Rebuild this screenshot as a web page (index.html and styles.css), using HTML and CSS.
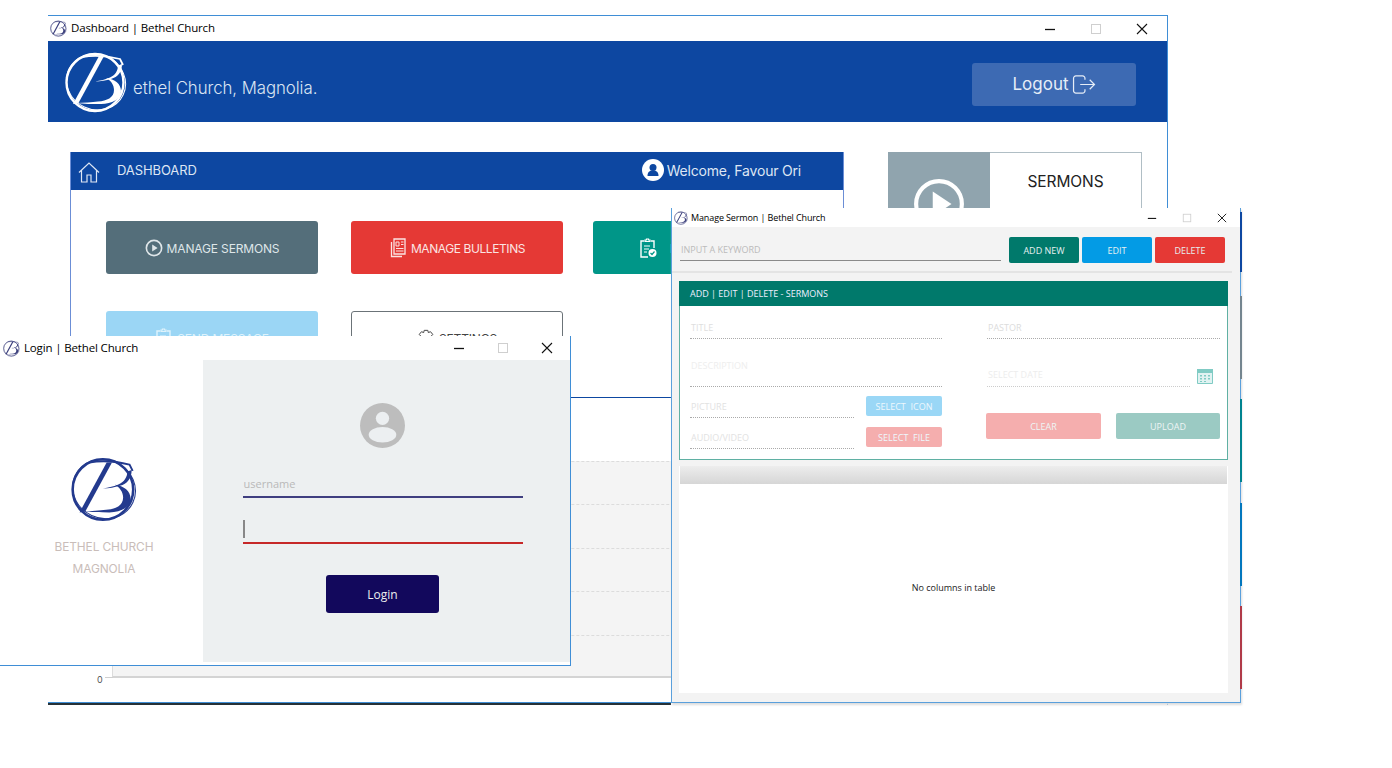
FILE: index.html
```html
<!DOCTYPE html>
<html lang="en">
<head>
<meta charset="utf-8">
<title>Bethel Church</title>
<link rel="stylesheet" href="styles.css">
</head>
<body>
<svg class="sprite" aria-hidden="true">
  <symbol id="logo" viewBox="0 0 64 64">
    <circle cx="31" cy="32.500" r="28.500" fill="none" stroke="currentColor" stroke-width="2.400"/>
    <ellipse cx="32" cy="32" rx="30" ry="27.500" transform="rotate(25 32 32)" fill="none" stroke="currentColor" stroke-width="1"/>
    <path d="M34.500 7h5L14.500 53l-5.500 1z" fill="currentColor"/>
    <path d="M18 7c12-2 26-1 38 2l3 6" fill="none" stroke="currentColor" stroke-width="1.800"/>
    <path d="M58 14c0 8-4 13-11 15-5 1.500-10 2.500-16 2.500 5-1 11-2 15-4 5-2 8-7 8-12z" fill="currentColor"/>
    <path d="M42 28c9 1 15 6 15 13 0 8-9 13-20 13-9 0-17 0-25-1 8 0 16-1 22-1.500 9-.5 16-4 16-11.500 0-5-3-9.500-8-12z" fill="currentColor"/>
  </symbol>
  <symbol id="min" viewBox="0 0 12 12"><path d="M1 6.500h10" stroke="currentColor" stroke-width="1.300"/></symbol>
  <symbol id="max" viewBox="0 0 12 12"><rect x="1.500" y="1.500" width="9" height="9" fill="none" stroke="#cfcfcf" stroke-width="1"/></symbol>
  <symbol id="close" viewBox="0 0 12 12"><path d="M1 1l10 10M11 1L1 11" stroke="currentColor" stroke-width="1.100"/></symbol>
  <symbol id="play" viewBox="0 0 20 20"><circle cx="10" cy="10" r="8.500" fill="none" stroke="currentColor" stroke-width="1.800"/><path d="M8 6l6 4-6 4z" fill="currentColor"/></symbol>
  <symbol id="clip" viewBox="0 0 18 20">
    <path d="M5 3H2v16h7M12 3h3v7" fill="none" stroke="currentColor" stroke-width="1.400"/>
    <path d="M6 3.500V2h1.500V1h2v1H11v1.500z" fill="none" stroke="currentColor" stroke-width="1.200"/>
    <path d="M5 8h6M5 11h5M5 14h3" stroke="currentColor" stroke-width="1"/>
    <circle cx="13.500" cy="15" r="4" fill="currentColor"/>
    <path d="M11.500 15l1.500 1.500 2.500-3" fill="none" stroke="#009688" stroke-width="1.200"/>
  </symbol>
</svg>

<main class="desktop">

  <section class="win win-main">
    <header class="titlebar titlebar-main">
      <svg class="fav"><use href="#logo"/></svg>
      <span class="title">Dashboard | Bethel Church</span>
      <div class="controls controls-main">
        <svg class="ctl"><use href="#min"/></svg>
        <svg class="ctl"><use href="#max"/></svg>
        <svg class="ctl"><use href="#close"/></svg>
      </div>
    </header>
    <div class="brandbar">
      <svg class="brand-logo"><use href="#logo"/></svg>
      <span class="brand-name">ethel Church, Magnolia.</span>
      <button class="logout">Logout
        <svg class="logout-icon" viewBox="0 0 24 20"><path d="M13 5V3.500A2.500 2.500 0 0 0 10.500 1H3.500A2.500 2.500 0 0 0 1 3.500v13A2.500 2.500 0 0 0 3.500 19h7a2.500 2.500 0 0 0 2.500-2.500V15M8 10h15M18 5l5 5-5 5" fill="none" stroke="currentColor" stroke-width="1.300"/></svg>
      </button>
    </div>
    <div class="dash">
      <div class="dash-left">
        <div class="panel">
          <div class="panel-head">
            <svg class="home" viewBox="0 0 22 21"><path d="M1 10.500L11 1l10 9.500M3.500 8.500V20H9v-7h4v7h5.500V8.500" fill="none" stroke="currentColor" stroke-width="1.200"/></svg>
            <span class="panel-title">DASHBOARD</span>
            <svg class="user" viewBox="0 0 22 22"><circle cx="11" cy="11" r="11" fill="#fff"/><circle cx="11" cy="8.500" r="3.500" fill="#0d47a1"/><path d="M5.500 17c0-4 2-5.500 5.500-5.500s5.500 1.500 5.500 5.500z" fill="#0d47a1"/></svg>
            <span class="welcome">Welcome, Favour Ori</span>
          </div>
          <div class="menu">
            <a class="tile tile-slate"><svg class="tile-icon"><use href="#play"/></svg>MANAGE SERMONS</a>
            <a class="tile tile-red">
              <svg class="tile-icon" viewBox="0 0 18 20"><path d="M5 1h11v15H5zM2.500 4v14.500H13" fill="none" stroke="currentColor" stroke-width="1.300"/><path d="M7 4h3v4H7zM12 4h2.500M12 6.500h2.500M7 10.500h7.500M7 13h7.500" fill="none" stroke="currentColor" stroke-width="1"/></svg>
              MANAGE BULLETINS</a>
            <a class="tile tile-teal"><svg class="tile-icon"><use href="#clip"/></svg>M</a>
            <a class="tile tile-sky"><svg class="tile-icon"><use href="#clip"/></svg>SEND MESSAGE</a>
            <a class="tile tile-outline">
              <svg class="tile-icon" viewBox="0 0 20 20"><path d="M8 1.500h4l.6 2.500 2.400-1 2.500 3-1.800 2 1.800 2.500-2.500 3-2.400-1-.6 2.500H8l-.6-2.500-2.400 1-2.500-3L4.300 8 2.500 6l2.500-3 2.400 1z" fill="none" stroke="currentColor" stroke-width="1.100"/></svg>
              SETTINGS</a>
          </div>
        </div>
        <div class="chart">
          <div class="grid-row"></div>
          <div class="grid-row"></div>
          <div class="grid-row"></div>
          <div class="grid-row"></div>
          <div class="grid-row grid-row-last"></div>
          <span class="zero">0</span>
        </div>
      </div>
      <div class="side-tile">
        <div class="side-pic">
          <svg class="side-play" viewBox="0 0 50 50"><circle cx="25" cy="25" r="22" fill="none" stroke="#fff" stroke-width="4"/><path d="M19 13l18 12-18 12z" fill="#fff"/></svg>
        </div>
        <div class="side-label">SERMONS</div>
      </div>
    </div>
    <div class="main-foot"></div>
  </section>

  <section class="win win-login">
    <header class="titlebar titlebar-login">
      <svg class="fav"><use href="#logo"/></svg>
      <span class="title">Login | Bethel Church</span>
      <div class="controls controls-login">
        <svg class="ctl"><use href="#min"/></svg>
        <svg class="ctl"><use href="#max"/></svg>
        <svg class="ctl"><use href="#close"/></svg>
      </div>
    </header>
    <div class="login-body">
      <div class="login-brand">
        <svg class="login-logo"><use href="#logo"/></svg>
        <p class="login-name">BETHEL CHURCH<br>MAGNOLIA</p>
      </div>
      <form class="login-form">
        <svg class="avatar" viewBox="0 0 44 44"><circle cx="22" cy="22" r="22" fill="#bdbdbd"/><circle cx="22" cy="15" r="6.500" fill="#eceff1"/><ellipse cx="22" cy="31" rx="13.500" ry="7.500" fill="#eceff1"/></svg>
        <div class="login-field field-user">username</div>
        <div class="login-field field-pass"><span class="caret"></span></div>
        <button class="login-btn" type="button">Login</button>
      </form>
    </div>
  </section>

  <section class="win win-sermon">
    <header class="titlebar titlebar-sermon">
      <svg class="fav fav-small"><use href="#logo"/></svg>
      <span class="title title-small">Manage Sermon | Bethel Church</span>
      <div class="controls controls-sermon">
        <svg class="ctl ctl-small"><use href="#min"/></svg>
        <svg class="ctl ctl-small"><use href="#max"/></svg>
        <svg class="ctl ctl-small"><use href="#close"/></svg>
      </div>
    </header>
    <div class="sermon-body">
      <div class="toolbar">
        <div class="search">INPUT A KEYWORD</div>
        <button class="tbtn tbtn-green">ADD NEW</button>
        <button class="tbtn tbtn-blue">EDIT</button>
        <button class="tbtn tbtn-red">DELETE</button>
      </div>
      <div class="card">
        <div class="card-head">ADD | EDIT | DELETE - SERMONS</div>
        <div class="card-body">
          <div class="col col-left">
            <div class="field f-title">TITLE</div>
            <div class="field f-desc">DESCRIPTION</div>
            <div class="file-row">
              <div class="field f-file">PICTURE</div>
              <button class="sbtn sbtn-sky">SELECT&nbsp; ICON</button>
            </div>
            <div class="file-row">
              <div class="field f-file">AUDIO/VIDEO</div>
              <button class="sbtn sbtn-pink">SELECT&nbsp; FILE</button>
            </div>
          </div>
          <div class="col col-right">
            <div class="field f-title f-pastor">PASTOR</div>
            <div class="date-row">
              <div class="field f-date">SELECT DATE</div>
              <svg class="cal" viewBox="0 0 16 17"><path d="M.5 2.500h15v14H.5z" fill="#e0f2f1" stroke="#80cbc4"/><path d="M0 2h16v4H0z" fill="#80cbc4"/><path d="M3 8h2v1.500H3zM7 8h2v1.500H7zM11 8h2v1.500h-2zM3 11h2v1.500H3zM7 11h2v1.500H7zM11 11h2v1.500h-2zM3 14h2v1H3zM7 14h2v1H7z" fill="#80cbc4"/></svg>
            </div>
            <div class="form-actions">
              <button class="abtn abtn-clear">CLEAR</button>
              <button class="abtn abtn-upload">UPLOAD</button>
            </div>
          </div>
        </div>
      </div>
      <div class="table">
        <div class="table-head"></div>
        <div class="table-empty">No columns in table</div>
      </div>
    </div>
  </section>

  <div class="edge-tiles">
    <span class="edge edge-blue"></span>
    <span class="edge edge-grey"></span>
    <span class="edge edge-teal"></span>
    <span class="edge edge-sky"></span>
    <span class="edge edge-red"></span>
  </div>
</main>
</body>
</html>
```
FILE: styles.css
```css
* { box-sizing: border-box; }
html, body { margin: 0; padding: 0; background: #fff; }
body { width: 1392px; height: 768px; overflow: hidden; font-family: "Inter", "Liberation Sans", sans-serif; }
.sprite { width: 0; height: 0; position: absolute; }
.desktop { position: relative; width: 1392px; height: 768px; }
button { font-family: inherit; border: 0; padding: 0; }

.win { position: absolute; background: #fff; display: flex; flex-direction: column; overflow: hidden; }
.win-main { left: 48px; top: 15px; width: 1120px; height: 690px; border-top: 1px solid #3f8ed6; border-right: 1px solid #3f8ed6; }
.win-login { left: 0; top: 336px; width: 571px; height: 330px; border-right: 1px solid #3f8ed6; border-bottom: 1px solid #3f8ed6; }
.win-sermon { left: 671px; top: 208px; width: 570px; height: 495px; border-left: 1px solid #5aa0dc; border-right: 1px solid #5aa0dc; border-bottom: 1px solid #5aa0dc; box-shadow: 1px 2px 2px #ddd; overflow: visible; }

.titlebar { display: flex; align-items: center; flex: none; color: #111; font-family: "Open Sans", sans-serif; }
.titlebar-main { height: 25px; padding: 0 0 0 2px; }
.titlebar-login { height: 24px; padding: 0 0 0 3px; }
.titlebar-sermon { height: 19px; padding: 0 0 0 2px; }
.fav { width: 17px; height: 17px; color: #3b3f7c; flex: none; }
.fav-small { width: 14px; height: 14px; }
.title { font-size: 11.500px; margin: -2px 0 0 4px; letter-spacing: -.15px; color: #000; }
.title-small { font-size: 9px; margin: -1px 0 0 3px; letter-spacing: -.12px; }
.controls { margin-left: auto; display: flex; align-items: center; color: #111; }
.ctl { width: 12px; height: 12px; flex: none; }
.ctl-small { width: 10px; height: 10px; }
.controls-main { gap: 34px; padding-right: 19px; }
.controls-login { gap: 32px; padding-right: 17px; }
.controls-sermon { gap: 25px; padding-right: 13px; }

.brandbar { height: 81px; flex: none; background: #0d47a1; display: flex; align-items: center; padding: 0 31px 0 16px; color: #fff; }
.brand-logo { width: 64px; height: 64px; flex: none; color: #fff; }
.brand-name { font-size: 16.800px; color: #dbe5f3; margin: 13px 0 0 5px; letter-spacing: -.05px; font-weight: 300; }
.logout { margin: 5px 0 0 auto; width: 164px; height: 43px; background: #3d6ab3; color: #e6edf7; border-radius: 3px; display: flex; align-items: center; justify-content: center; gap: 3px; font-size: 17px; }
.logout-icon { width: 24px; height: 19px; flex: none; }

.dash { display: flex; padding: 30px 0 0 22px; gap: 44px; align-items: flex-start; flex: 1; }
.dash-left { width: 774px; flex: none; }
.panel { height: 246px; border-left: 1px solid #6b8ed6; border-right: 1px solid #6b8ed6; border-bottom: 1px solid #0d47a1; overflow: hidden; }
.panel-head { height: 38px; margin: 0 -1px; background: #0d47a1; color: #dde6f4; display: flex; align-items: center; padding: 0 43px 2px 8px; }
.home { width: 22px; height: 21px; flex: none; margin-top: 4px; }
.panel-title { font-size: 13px; margin-left: 17px; letter-spacing: -.1px; }
.user { width: 22px; height: 22px; margin-left: auto; flex: none; }
.welcome { font-size: 14px; margin-left: 3px; letter-spacing: -.2px; }

.menu { display: grid; grid-template-columns: 245px 242px 212px; grid-auto-rows: 53px; row-gap: 37px; padding: 31px 0 0 35px; }
.tile { width: 212px; display: flex; align-items: center; justify-content: center; gap: 4px; padding-top: 1px; font-size: 12px; letter-spacing: -.15px; border-radius: 3px; color: #e8eef0; }
.tile-icon { width: 18px; height: 20px; flex: none; }
.tile-slate { background: #546e7a; color: #dfe6e9; }
.tile-red { background: #e53935; color: #fbe4e3; letter-spacing: -.42px; }
.tile-teal { background: #009688; color: #fff; justify-content: flex-start; padding-left: 46px; gap: 13px; }
.tile-sky { background: #9bd6f5; color: #dff3fc; }
.tile-outline { background: #fff; border: 1px solid #6b7378; color: #444; }

.chart { position: relative; margin-top: 63px; margin-left: -22px; padding-left: 64px; }
.grid-row { height: 43.400px; background: #f4f4f4; border-top: 1px dashed #dcdcdc; border-left: 1px solid #dcdcdc; position: relative; }
.grid-row-last { border-bottom: 2px solid #d4d4d4; }
.grid-row-last::before { content: ""; position: absolute; left: -8px; bottom: -2px; width: 8px; height: 1px; background: #cfcfcf; }
.chart .zero { position: absolute; left: 49px; bottom: -8px; font-size: 9px; line-height: 12px; color: #555; }

.main-foot { height: 3px; width: 623px; flex: none; background: #263238; border-top: 1px solid #3f8ed6; position: absolute; left: 0; bottom: 0; }

.side-tile { width: 254px; height: 110px; flex: none; border: 1px solid #b0bec5; display: flex; }
.side-pic { width: 102px; background: #90a4ae; margin: -1px 0 -1px -1px; display: flex; justify-content: center; align-items: flex-start; padding-top: 26px; }
.side-play { width: 52px; height: 52px; }
.side-label { flex: 1; text-align: center; padding-top: 19px; font-size: 15.500px; color: #222; letter-spacing: -.1px; }

.login-body { flex: 1; display: flex; padding-bottom: 3px; }
.login-brand { width: 203px; flex: none; display: flex; flex-direction: column; align-items: center; padding: 95px 0 0 5px; }
.login-logo { width: 70px; height: 68px; color: #233a8e; }
.login-name { margin: 13px 0 0; text-align: center; font-size: 11.900px; line-height: 22px; color: #c9bdb9; letter-spacing: -.1px; }
.login-form { flex: 1; background: #edf0f1; display: flex; flex-direction: column; align-items: center; padding: 43px 8px 0 0; }
.avatar { width: 45px; height: 45px; flex: none; }
.login-field { width: 280px; height: 30px; font-family: "Open Sans", sans-serif; font-size: 11px; line-height: 16px; padding-left: 1px; color: #b9b9b9; display: flex; align-items: flex-end; padding-bottom: 4px; }
.field-user { margin-top: 20px; border-bottom: 2px solid #3f3f80; }
.field-pass { margin-top: 17px; height: 29px; border-bottom: 2px solid #c62828; padding: 0 0 4px 0; }
.caret { width: 2px; height: 18px; background: #888; }
.login-btn { width: 113px; height: 38px; margin-top: 31px; background: #12085c; color: #eee; border-radius: 3px; font-size: 12px; font-family: "Open Sans", sans-serif; }

.sermon-body { flex: 1; background: #f3f3f3; display: flex; flex-direction: column; padding: 0 0 9px 7px; }
.toolbar { display: flex; align-items: flex-start; height: 46px; margin: 0 8px 0 -7px; padding: 10px 7px 0 8px; border-bottom: 2px solid #e4e4e4; gap: 3px; flex: none; }
.search { width: 321px; height: 24px; margin-right: 5px; border-bottom: 1px solid #8a8a8a; font-family: "Open Sans", sans-serif; font-size: 9px; line-height: 26px; padding-left: 1px; color: #bbb; }
.tbtn { width: 70px; height: 26px; color: #e6f0f0; border-radius: 2px; font-size: 9px; font-family: "Open Sans", sans-serif; }
.tbtn-green { background: #00796b; }
.tbtn-blue { background: #039be5; }
.tbtn-red { background: #e53935; }

.card { width: 549px; height: 179px; margin-top: 8px; border: 1px solid #5fb0a3; background: #fff; flex: none; display: flex; flex-direction: column; }
.card-head { height: 25px; margin: -1px -1px 0; flex: none; background: #00796b; color: #eef; font-family: "Open Sans", sans-serif; font-size: 9px; line-height: 25px; padding-left: 11px; }
.card-body { display: flex; flex: 1; padding: 13px 7px 0 10px; }
.col { display: flex; flex-direction: column; }
.col-left { width: 252px; }
.col-right { width: 233px; margin-left: 45px; }
.field { font-family: "Open Sans", sans-serif; font-size: 9px; color: #dedede; border-bottom: 1px dotted #aaa; padding-left: 1px; line-height: 18px; height: 20px; }
.f-desc { height: 37px; margin-top: 11px; padding-top: 7px; color: #eeeeee; }
.f-file { width: 164px; height: 21px; line-height: 20px; color: #e2e2e2; }
.f-pastor { color: #dcdcdc; }
.file-row { display: flex; justify-content: space-between; align-items: flex-start; margin-top: 10px; }
.sbtn { width: 76px; height: 20px; margin-top: -1px; border-radius: 2px; color: #eef8fd; font-size: 9px; font-family: "Open Sans", sans-serif; }
.sbtn-sky { background: #9ad7f6; }
.sbtn-pink { background: #f5aeae; }
.date-row { display: flex; align-items: flex-end; margin-top: 27px; }
.f-date { width: 203px; height: 21px; color: #ededed; border-bottom-color: #ccc; }
.cal { width: 16px; height: 17px; margin: 0 0 3px 7px; flex: none; }
.form-actions { display: flex; gap: 15px; margin: 26px 0 0 -1px; }
.abtn { height: 26px; border-radius: 2px; color: #eef5f5; font-size: 9px; font-family: "Open Sans", sans-serif; }
.abtn-clear { width: 115px; background: #f5aeae; }
.abtn-upload { width: 104px; background: #9bcac3; }

.table { width: 549px; flex: 1; margin-top: 6px; background: #fff; display: flex; flex-direction: column; }
.table-head { height: 18px; flex: none; background: linear-gradient(#ededed, #d6d6d6); margin: 0 1px; }
.table-empty { flex: 1; display: flex; align-items: center; justify-content: center; font-family: "Open Sans", sans-serif; font-size: 9px; color: #222; padding-bottom: 2px; }

.edge-tiles { position: absolute; left: 1240px; top: 212px; width: 2px; display: flex; flex-direction: column; gap: 20.500px; }
.edge { display: block; height: 83px; }
.edge-blue { background: #0d47a1; height: 60px; margin-bottom: 3px; }
.edge-grey { background: #74858f; }
.edge-teal { background: #00838f; }
.edge-sky { background: #0277bd; }
.edge-red { background: #b03a48; }
```
